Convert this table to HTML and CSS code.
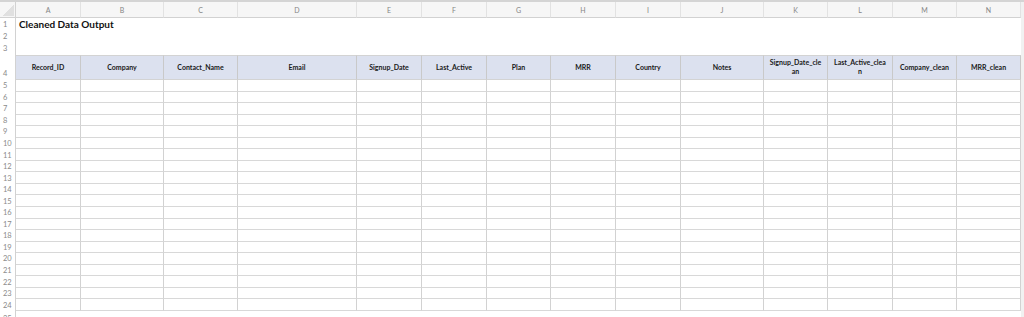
FILE: index.html
```html
<!DOCTYPE html>
<html lang="en">
<head>
    <meta charset="UTF-8">
    <title>Cleaned Data Output</title>
    <link rel="stylesheet" href="styles.css">
</head>
<body>
    <div class="sheet">
        <table class="grid">
            <colgroup>
                <col class="w16">
                <col class="w65"><col class="w83"><col class="w74"><col class="w119">
                <col class="w65"><col class="w65"><col class="w64"><col class="w65">
                <col class="w65"><col class="w83"><col class="w64"><col class="w65">
                <col class="w64"><col class="w64">
            </colgroup>
            <thead>
                <tr class="letters">
                    <th class="corner"></th>
                    <th>A</th><th>B</th><th>C</th><th>D</th><th>E</th><th>F</th><th>G</th>
                    <th>H</th><th>I</th><th>J</th><th>K</th><th>L</th><th>M</th><th>N</th>
                </tr>
            </thead>
            <tbody id="rows">
                <tr class="row-top">
                    <th class="num">1</th>
                    <td class="title" colspan="14">Cleaned Data Output</td>
                </tr>
                <tr class="row-top">
                    <th class="num">2</th>
                    <td colspan="14"></td>
                </tr>
                <tr class="row-top">
                    <th class="num">3</th>
                    <td colspan="14"></td>
                </tr>
                <tr class="row-head">
                    <th class="num">4</th>
                    <th class="head">Record_ID</th>
                    <th class="head">Company</th>
                    <th class="head">Contact_Name</th>
                    <th class="head">Email</th>
                    <th class="head">Signup_Date</th>
                    <th class="head">Last_Active</th>
                    <th class="head">Plan</th>
                    <th class="head">MRR</th>
                    <th class="head">Country</th>
                    <th class="head">Notes</th>
                    <th class="head">Signup_Date_cle<br>an</th>
                    <th class="head">Last_Active_clea<br>n</th>
                    <th class="head">Company_clean</th>
                    <th class="head">MRR_clean</th>
                </tr>
            </tbody>
        </table>
    </div>

    <script>
        // empty output rows 5..24, plus the half-visible row 25
        const rows = document.getElementById('rows');
        for (let r = 5; r <= 25; r++) {
            const tr = document.createElement('tr');
            tr.className = r === 25 ? 'row-tail' : 'row';
            const th = document.createElement('th');
            th.className = 'num';
            th.textContent = r;
            tr.appendChild(th);
            for (let c = 0; c < 14; c++) {
                const td = document.createElement('td');
                if (r < 25) td.className = 'cell';
                tr.appendChild(td);
            }
            rows.appendChild(tr);
        }
    </script>
</body>
</html>
```

FILE: styles.css
```css
body {
    margin: 0;
    background: #fff;
    font-family: Lato, "Open Sans", sans-serif;
    overflow: hidden;
}

.sheet {
    border-top: 2px solid #d4d4d4;
    background: linear-gradient(to right, #fff 1021px, #f1f1f1 1021px);
    height: 315px;
}

.grid {
    table-layout: fixed;
    border-collapse: separate;
    border-spacing: 0;
    width: 1021px;
}

.w16 { width: 16px; }
.w64 { width: 64px; }
.w65 { width: 65px; }
.w74 { width: 74px; }
.w83 { width: 83px; }
.w119 { width: 119px; }

th, td {
    padding: 0;
    box-sizing: border-box;
}

/* column letters */
.letters {
    height: 16px;
}

.letters th {
    background: #f6f6f6;
    border-bottom: 1px solid #d2d2d2;
    border-right: 1px solid #e2e2e2;
    font-size: 7px;
    font-weight: normal;
    color: #858585;
    text-align: center;
}

.letters th.corner {
    border-right: 1px solid #d2d2d2;
    background: linear-gradient(135deg, transparent 50%, #e0e0e0 50%) right 1px bottom 1px / 11px 11px no-repeat, #f6f6f6;
}

/* row numbers */
.num {
    border-right: 1px solid #d2d2d2;
    font-size: 7.5px;
    font-weight: normal;
    color: #8a8a8a;
    text-align: left;
    padding-left: 3px;
    overflow: hidden;
    white-space: nowrap;
}

.row-top {
    height: 12.33px;
}

.title {
    font-size: 10px;
    font-weight: bold;
    color: #111;
    padding-left: 3px;
    white-space: nowrap;
}

/* header of the output table */
.row-head {
    height: 25px;
}

.row-head .num {
    vertical-align: bottom;
    padding-bottom: 2px;
}

.head {
    background: #dce1ef;
    border-top: 1px solid #d3d3d3;
    border-right: 1px solid #c9c9c9;
    border-bottom: 1px solid #d3d3d3;
    font-size: 7px;
    font-weight: bold;
    line-height: 9px;
    color: #1a1a1a;
    text-align: center;
    vertical-align: middle;
    white-space: nowrap;
}

/* empty data cells */
.row {
    height: 11.55px;
}

.cell {
    border-right: 1px solid #d2d2d2;
    border-bottom: 1px solid #d8d8d8;
}

.row-tail {
    height: 11.55px;
}

.row-tail .num {
    vertical-align: top;
    padding-top: 3px;
}
```
